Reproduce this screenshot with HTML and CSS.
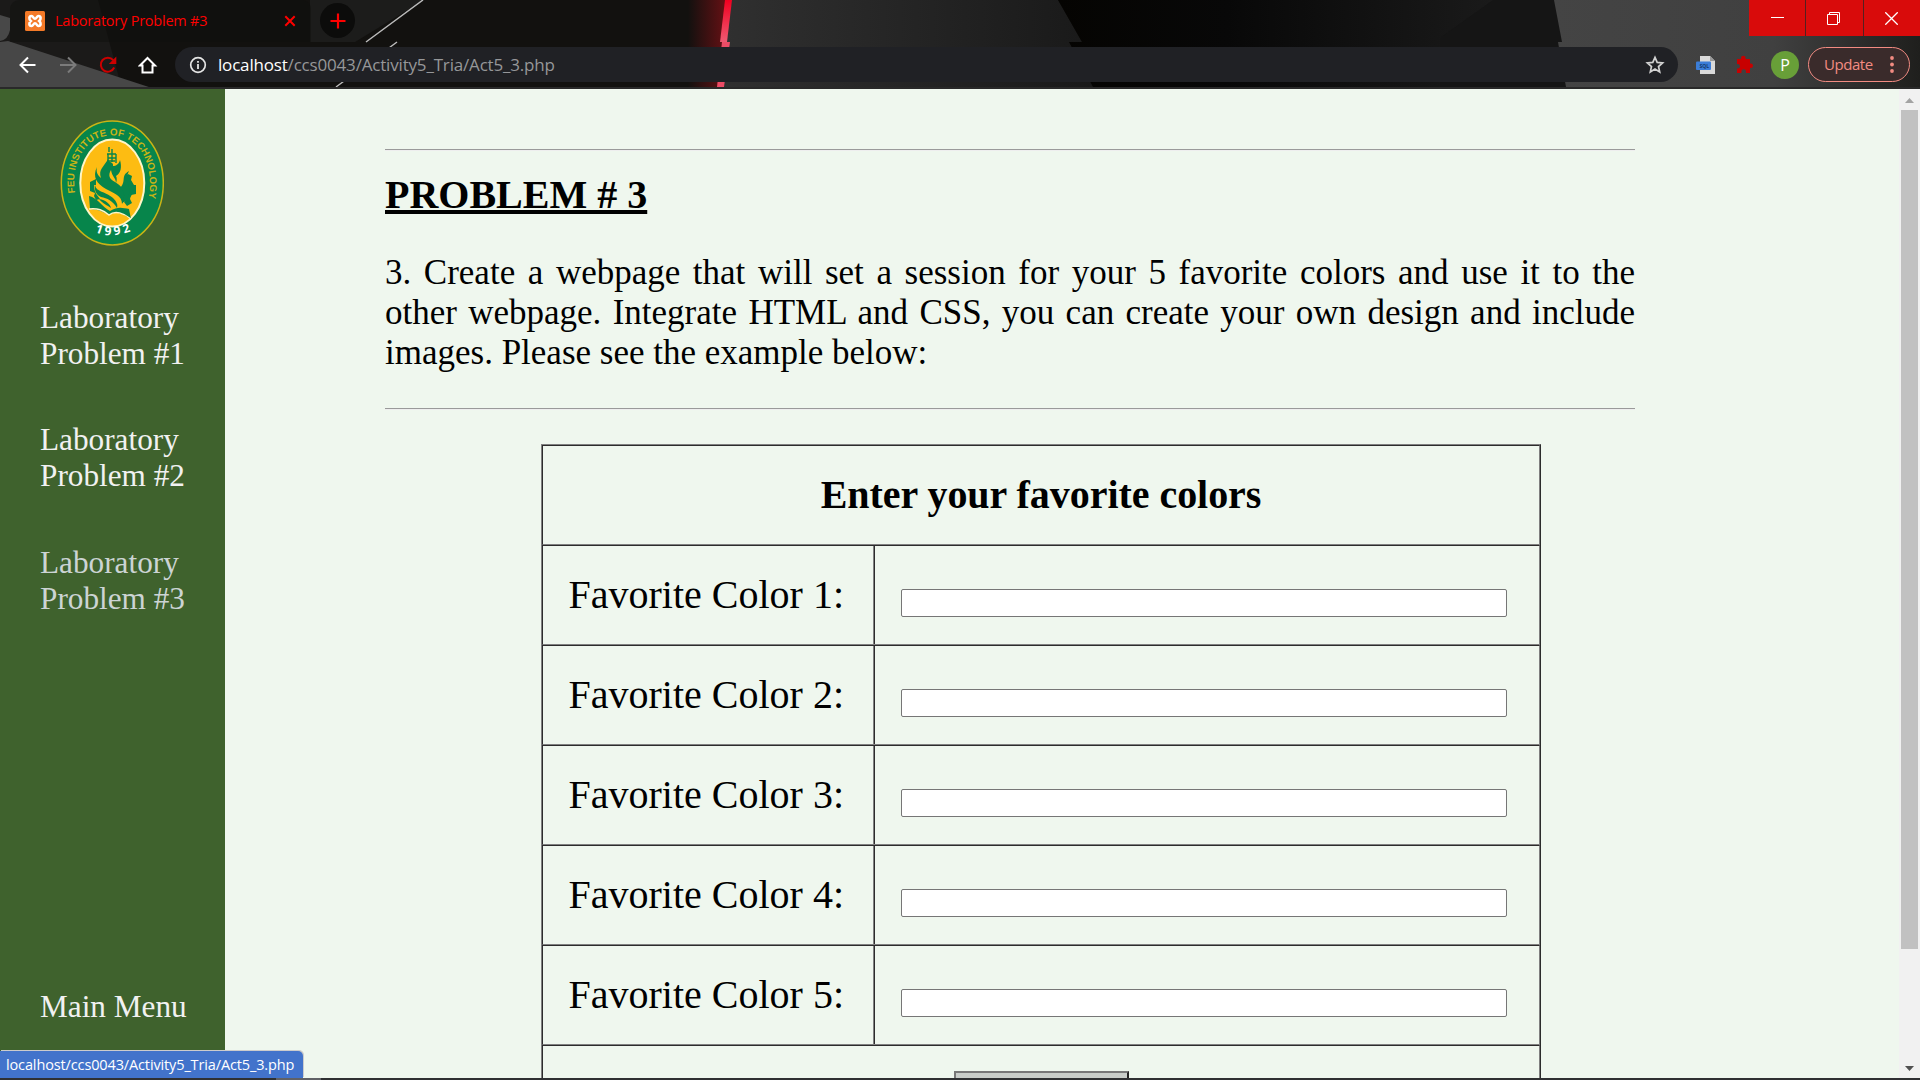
FILE: index.html
```html
<!DOCTYPE html>
<html lang="en">
<head>
<meta charset="utf-8">
<title>Laboratory Problem #3</title>
<link rel="stylesheet" href="styles.css">
</head>
<body>
<div class="browser">
  <header class="chrome">
    <svg class="theme" width="1920" height="89" viewBox="0 0 1920 89">
      <defs>
        <linearGradient id="glow" x1="0" x2="1"><stop offset="0" stop-color="#6a1014" stop-opacity="0"/><stop offset="1" stop-color="#6a1014"/></linearGradient>
        <linearGradient id="beam" x1="0" x2="0" y1="0" y2="1"><stop offset="0" stop-color="#f00020"/><stop offset="1" stop-color="#ee5a72"/></linearGradient>
        <linearGradient id="mid" x1="0" x2="1"><stop offset="0" stop-color="#303030"/><stop offset="1" stop-color="#191919"/></linearGradient>
        <linearGradient id="dark" x1="0" x2="1"><stop offset="0" stop-color="#050402"/><stop offset="0.35" stop-color="#080808"/><stop offset="1" stop-color="#1d1d1d"/></linearGradient>
        <linearGradient id="right" x1="0" x2="1"><stop offset="0" stop-color="#444"/><stop offset="0.6" stop-color="#404040"/><stop offset="1" stop-color="#1f1f1d"/></linearGradient>
      </defs>
      <rect width="1920" height="89" fill="#12110f"/>
      <path d="M0 0H98L122 89H0Z" fill="#1b1a19"/>
      <path d="M310 0H424L355 42H310Z" fill="#1c1c1b"/>
      <path d="M0 15L10 18V30Q8 40 0 41Z" fill="#484848"/>
      <path d="M8 41L155 89H0V42Z" fill="#474747"/>
      <path d="M423 0L366 42M397 42L336 87" stroke="#bbb" stroke-width="1.5"/>
      <rect x="688" y="0" width="40" height="87" fill="url(#glow)"/>
      <path d="M727 0H1058L1082 42H1069L1096 87H720L727 42Z" fill="url(#mid)"/>
      <path d="M725 0H732L727 42H720Z" fill="url(#beam)"/>
      <path d="M722 42H730L724 87H717Z" fill="#ed4c66"/>
      <path d="M1058 0H1540V87H1093L1069 42H1082Z" fill="url(#dark)"/>
      <path d="M1493 0L1440 38V87H1570L1555 0Z" fill="#151515"/>
      <path d="M1554 0H1920V87H1566L1558 42H1562Z" fill="url(#right)"/>
      <rect y="87" width="1920" height="2" fill="#292929"/>
    </svg>
    <div class="tabs">
      <div class="tab">
        <svg width="20" height="20" viewBox="0 0 20 20"><rect width="20" height="20" rx="1.500" fill="#f47a28"/><path d="M6.500 5C3.800 5 3.800 8.300 5.800 10C3.800 11.700 3.800 15 6.500 15C8.300 15 8.300 12.300 10 12.300S11.700 15 13.500 15C16.200 15 16.200 11.700 14.200 10C16.200 8.300 16.200 5 13.500 5C11.700 5 11.700 7.700 10 7.700S8.300 5 6.500 5Z" fill="none" stroke="#fff" stroke-width="2.600"/><path d="M8 10H12" stroke="#f47a28" stroke-width="1"/></svg>
        <span class="tab-title">Laboratory Problem #3</span>
        <svg class="tab-close" width="12" height="12" viewBox="0 0 12 12"><path d="M1.300 1.300L10.700 10.700M10.700 1.300L1.300 10.700" stroke="#f00" stroke-width="2"/></svg>
      </div>
      <div class="new-tab"><svg width="16" height="16" viewBox="0 0 16 16"><path d="M8 .5V15.500M.5 8H15.500" stroke="#f00" stroke-width="2.200"/></svg></div>
      <div class="window-buttons">
        <span class="minimize"><svg width="13" height="13" viewBox="0 0 13 13"><path d="M0 5.500H13" stroke="#fff"/></svg></span>
        <span class="restore"><svg width="13" height="13" viewBox="0 0 13 13"><path d="M.5 2.500H10.500V12.500H.5ZM2.500 2.500V.5H12.500V10.500H10.500" fill="none" stroke="#fff"/></svg></span>
        <span class="close"><svg width="13" height="13" viewBox="0 0 13 13"><path d="M.3 .3L12.700 12.700M12.700 .3L.3 12.700" stroke="#fff" stroke-width="1.300"/></svg></span>
      </div>
    </div>
    <div class="toolbar">
      <div class="nav-buttons">
        <svg width="20" height="20" viewBox="0 0 20 20"><path d="M17.500 10H3M10 2.500L2.500 10L10 17.500" fill="none" stroke="#fff" stroke-width="2"/></svg>
        <svg width="20" height="20" viewBox="0 0 20 20"><path d="M2 10H17M10 2.500L17.500 10L10 17.500" fill="none" stroke="#7b7b7b" stroke-width="2"/></svg>
        <svg width="20" height="20" viewBox="0 0 20 20"><path d="M16.200 12.500A7 7 0 1 1 15.200 5.200" fill="none" stroke="#c00" stroke-width="2"/><path d="M18.300 1.500V9H10.800Z" fill="#c00"/></svg>
        <svg width="20" height="20" viewBox="0 0 20 20"><path d="M2 10.500H4.500V17.500H14.500V10.500H17L9.500 3Z" fill="none" stroke="#fff" stroke-width="2"/></svg>
      </div>
      <div class="address">
        <svg width="18" height="18" viewBox="0 0 18 18"><circle cx="9" cy="9" r="7.300" fill="none" stroke="#e4e4e4" stroke-width="1.700"/><path d="M9 8V13M9 5V6.800" stroke="#e4e4e4" stroke-width="1.800"/></svg>
        <span class="url"><b>localhost</b>/ccs0043/Activity5_Tria/Act5_3.php</span>
        <svg class="star" width="20" height="20" viewBox="0 0 20 20"><path d="M10 2.400L12.200 7.400L17.600 7.900L13.500 11.500L14.700 16.900L10 14.100L5.300 16.900L6.500 11.500L2.400 7.900L7.800 7.400Z" fill="none" stroke="#d2d2d2" stroke-width="1.700"/></svg>
      </div>
      <svg class="sql" width="20" height="20" viewBox="0 0 20 20"><path d="M4 1H14L19 6V19H4Z" fill="#d9d9d9"/><path d="M14 1L19 6H14Z" fill="#999"/><rect y="6.500" width="15" height="8.500" rx="1" fill="#3b7dd8"/><text x="3.500" y="13" class="sql-text">SQL</text></svg>
      <svg class="puzzle" width="18" height="19" viewBox="0 0 18 19"><path d="M1 4H5V3A2.300 2.300 0 0 1 9.600 3V4H14V8.500H15.200A2.300 2.300 0 0 1 15.200 13H14V18H10V16.500A2.300 2.300 0 0 0 5.400 16.500V18H1V13.500H2.200A2.300 2.300 0 0 0 2.200 9H1Z" fill="#c80000"/></svg>
      <span class="avatar">P</span>
      <div class="update"><span>Update</span><svg width="4" height="17" viewBox="0 0 4 17"><g fill="#f28b82"><circle cx="2" cy="2" r="1.900"/><circle cx="2" cy="8.500" r="1.900"/><circle cx="2" cy="15" r="1.900"/></g></svg></div>
    </div>
  </header>
  <div class="page">
    <nav class="sidebar">
      <svg class="logo" width="104" height="128" viewBox="0 0 104 128">
        <defs><path id="arc" d="M15 73C10 40 27 15.500 52 15.500S94 40 89 77"/><path id="year" d="M33 111Q52 121 78 108"/></defs>
        <ellipse cx="52.300" cy="63" rx="51" ry="62" fill="#07854b" stroke="#c9b416" stroke-width="1.500"/>
        <ellipse cx="52.300" cy="63" rx="32" ry="43.500" fill="#fdbc12" stroke="#fff6c8" stroke-width="2"/>
        <text class="seal-name"><textPath href="#arc">FEU INSTITUTE OF TECHNOLOGY</textPath></text>
        <text class="seal-year"><textPath href="#year" startOffset="2" textLength="37">1992</textPath></text>
        <path d="M49 27V32M52 29V42M47 34H56M48 38H56M48 41H55M56 34V43M48 34V41" fill="none" stroke="#07854b" stroke-width="1.400"/>
        <path d="M48 39C44 47 38 49 41 58C37 55 36 51 37 47C32 57 37 64 46 69C54 73 62 76 62 84C69 74 63 67 55 62C49 59 48 55 51 50C52 57 56 58 56 63C57 60 57 58 56 56C61 53 62 47 60 40C59 44 56 46 53 46C54 42 49 43 48 39Z" fill="#07854b"/>
        <path d="M69 51C60 56 67 61 60 68C64 71 66 76 62 83C72 78 75 72 71 66C68 61 65 59 69 51Z" fill="#07854b"/>
        <path d="M35 64C35 72 45 71 53 78C57 82 58 85 57 88C53 81 47 78 41 77C36 75 34 70 35 64ZM39 79C46 80 50 84 51 88C47 85 43 84 39 79Z" fill="#07854b"/>
        <path d="M36 59V65H34C34 72 37 75 40 79L36 80L34 76L35 73L30 71V62ZM65 57L68 54L72 56L71 60L74 65H76V74L71 75L70 79L72 83L67 86L64 82C71 76 71 68 65 57Z" fill="#07854b"/>
        <path d="M29 76C38 78 42 87 50 91C58 86 63 88 69 89L71 99C61 92 56 91 49 95C42 91 37 89 30 89Z" fill="#07854b"/>
        <path d="M29 89C38 88 43 90 49 95C55 90 64 93 71 99" fill="none" stroke="#fff6c8" stroke-width="1.500"/>
      </svg>
      <a class="lab first">Laboratory Problem #1</a>
      <a class="lab">Laboratory Problem #2</a>
      <a class="lab current">Laboratory Problem #3</a>
      <a class="main-menu">Main Menu</a>
    </nav>
    <main class="content">
      <hr>
      <h1>PROBLEM # 3</h1>
      <p>3. Create a webpage that will set a session for your 5 favorite colors and use it to the other webpage. Integrate HTML and CSS, you can create your own design and include images. Please see the example below:</p>
      <hr>
      <form class="colors">
        <div class="row title">Enter your favorite colors</div>
        <div class="row"><label>Favorite Color 1:</label><div class="field"><input type="text"></div></div>
        <div class="row"><label>Favorite Color 2:</label><div class="field"><input type="text"></div></div>
        <div class="row"><label>Favorite Color 3:</label><div class="field"><input type="text"></div></div>
        <div class="row"><label>Favorite Color 4:</label><div class="field"><input type="text"></div></div>
        <div class="row"><label>Favorite Color 5:</label><div class="field"><input type="text"></div></div>
        <div class="row submit"><span class="button"></span></div>
      </form>
    </main>
    <div class="scrollbar">
      <svg width="9" height="5" viewBox="0 0 9 5"><path d="M0 5L4.500 0L9 5Z" fill="#a3a3a3"/></svg>
      <div class="thumb"></div>
      <svg class="down" width="9" height="5" viewBox="0 0 9 5"><path d="M0 0H9L4.500 5Z" fill="#505050"/></svg>
    </div>
  </div>
  <footer class="taskbar"><i></i></footer>
  <div class="status"><span>localhost/ccs0043/Activity5_Tria/Act5_3.php</span></div>
</div>
</body>
</html>
```
FILE: styles.css
```css
* { box-sizing: border-box; }
body { margin: 0; overflow: hidden; font-family: "Liberation Serif", serif; }
.browser { position: relative; width: 1920px; height: 1080px; display: flex; flex-direction: column; overflow: hidden; }
svg { display: block; flex: none; }

.chrome { position: relative; height: 89px; flex: none; font-family: "Open Sans", sans-serif; }
.theme { position: absolute; left: 0; top: 0; }
.tabs { position: relative; height: 42px; display: flex; }
.tab { width: 301px; height: 42px; margin-left: 10px; padding-left: 15px; display: flex; align-items: center; border-radius: 9px 9px 0 0; background: rgba(15, 15, 13, .45); color: #f00; }
.tab-title { width: 200px; margin: 0 0 1px 10px; font-size: 14.5px; letter-spacing: -.22px; white-space: nowrap; }
.tab-close { margin-left: 29px; }
.new-tab { width: 35px; height: 35px; margin: 3px 0 0 9px; border-radius: 50%; background: #0c0c0b; display: grid; place-items: center; }
.window-buttons { display: flex; height: 36px; margin-left: auto; background: #542020; gap: 1px; }
.window-buttons span { display: grid; place-items: center; padding-right: 2px; background: #d90b0b; }
.window-buttons .minimize { width: 56px; padding-right: 0; }
.restore { width: 57px; }
.close { width: 56px; }
.toolbar { position: relative; height: 45px; display: flex; align-items: center; padding: 0 10px 0 18px; }
.nav-buttons { display: flex; gap: 20px; width: 157px; }
.address { width: 1503px; height: 35px; border-radius: 18px; background: #202125; display: flex; align-items: center; padding: 0 13px 0 14px; }
.url { margin-left: 11px; font-size: 17px; letter-spacing: -.18px; color: #969799; white-space: nowrap; }
.url b { color: #fff; font-weight: 400; }
.star { margin-left: auto; }
.sql { margin-left: 18px; }
.sql-text { font: bold 5px "Open Sans", sans-serif; fill: #173a6a; }
.puzzle { margin-left: 20px; }
.avatar { width: 28px; height: 28px; margin-left: 17px; border-radius: 50%; background: #689f38; color: #fff; display: grid; place-items: center; font-size: 16px; }
.update { width: 102px; height: 35px; margin-left: 9px; border: 1.5px solid #f28b82; border-radius: 18px; background: #3a2b2b; color: #f28b82; display: flex; align-items: center; justify-content: space-between; padding: 0 15px 1px 15px; font-size: 15px; letter-spacing: -.45px; }

.page { height: 989px; flex: none; display: flex; background: #eff7ee; overflow: hidden; }
.sidebar { width: 225px; flex: none; background: #3f622d; padding: 31px 39px 0 40px; display: flex; flex-direction: column; font-size: 31.25px; line-height: 36px; color: #f1f1f1; }
.logo { margin: 0 0 52px 20px; }
.seal-name { font: bold 9.8px "Liberation Sans", sans-serif; fill: #c9b416; }
.seal-year { font: bold 12px "Open Sans", sans-serif; fill: #fff; }
.lab { height: 72px; margin-bottom: 51px; }
.first { margin-bottom: 50px; }
.current { color: #ccd4d4; }
.main-menu { margin-top: 321px; white-space: nowrap; }

.content { width: 1250px; margin-left: 160px; padding-top: 60px; }
hr { height: 2px; margin: 0; border: 0; border-top: 1px solid #9a9a9a; border-bottom: 1px solid #eee; }
h1 { margin: 21px 0 35px; font-size: 40px; line-height: 46px; text-decoration: underline; }
p { margin: 0 0 35px; font-size: 35px; line-height: 40px; text-align: justify; }
.colors { width: 1000px; margin: 34px 0 0 156px; border: 1px solid #808080; border-right-color: #2c2c2c; border-bottom: 0; font-size: 40px; line-height: 46px; }
.row { height: 100px; display: flex; border: 1px solid #2c2c2c; border-right-color: #808080; border-bottom-color: #808080; }
.title { align-items: center; justify-content: center; font-weight: bold; letter-spacing: -.04px; }
label { width: 331px; padding: 26px 0 0 25.5px; border-right: 1px solid #808080; white-space: nowrap; }
.field { flex: 1; border-left: 1px solid #2c2c2c; padding: 43px 32px 0 26px; }
input { display: block; width: 100%; height: 28px; border: 1px solid #767676; border-radius: 2px; background: #fff; }
.submit { padding: 25px 0 0 411px; }
.button { width: 175px; height: 40px; border: 2px solid #777; border-right-color: #222; border-bottom-color: #222; background: #c9cdc9; }

.scrollbar { width: 21px; margin-left: auto; background: #f1f1f1; padding: 9px 2px 7px; display: flex; flex-direction: column; align-items: center; }
.thumb { width: 17px; height: 839px; margin-top: 7px; background: #c1c1c1; }
.down { margin-top: auto; }
.taskbar { height: 2px; background: #2f3032; padding-left: 276px; }
.taskbar i { display: block; width: 45px; height: 2px; background: #606166; }
.status { position: absolute; left: 0; bottom: 2px; width: 303px; height: 27px; padding-left: 6px; background: #4273cb; border-radius: 0 5px 0 0; color: #fff; font: 14.5px/27px "Open Sans", sans-serif; letter-spacing: -.13px; white-space: nowrap; box-shadow: 1px -1px #ccc; }
```
